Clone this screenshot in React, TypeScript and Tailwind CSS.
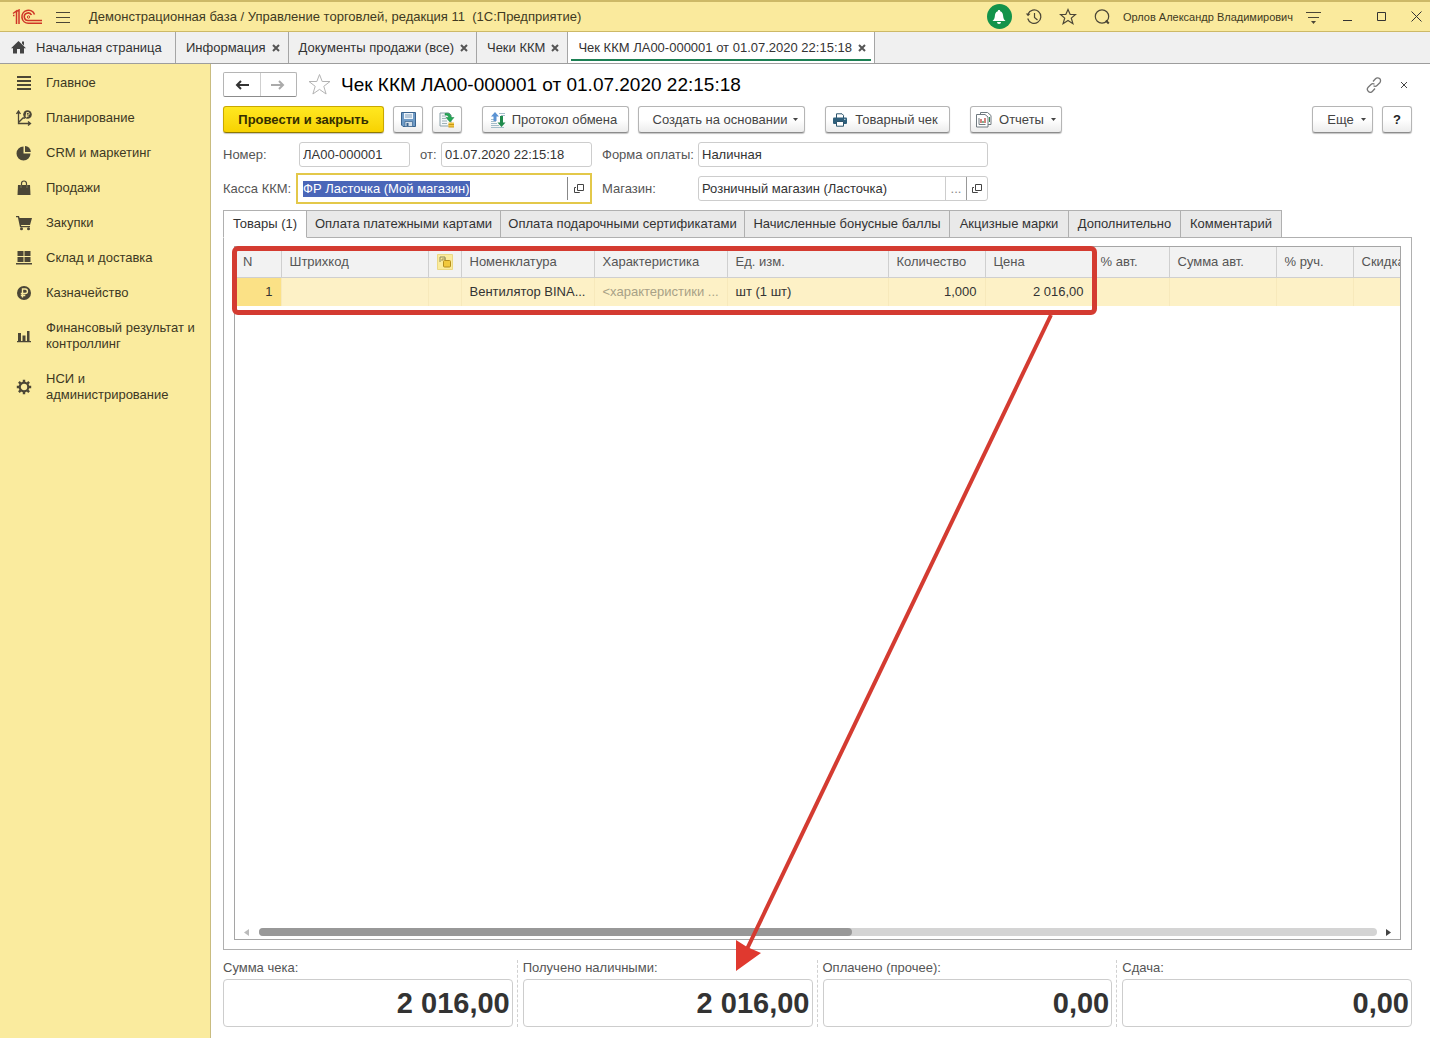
import { useEffect, useRef, useState } from 'react'
import type { ReactNode } from 'react'
import clsx from 'clsx'

const openTabs = [
  { title: 'Информация' },
  { title: 'Документы продажи (все)' },
  { title: 'Чеки ККМ' },
  { title: 'Чек ККМ ЛА00-000001 от 01.07.2020 22:15:18', active: true },
]

const documentTabs = [
  { title: 'Товары (1)', width: 'w-[84px]' },
  { title: 'Оплата платежными картами', width: 'w-[194px]' },
  { title: 'Оплата подарочными сертификатами', width: 'w-[244px]' },
  { title: 'Начисленные бонусные баллы', width: 'w-[205px]' },
  { title: 'Акцизные марки', width: 'w-[119px]' },
  { title: 'Дополнительно', width: 'w-[112px]' },
  { title: 'Комментарий', width: 'w-[101px]' },
]

const totals = [
  { id: 'sum', label: 'Сумма чека:', value: '2 016,00' },
  { id: 'cash', label: 'Получено наличными:', value: '2 016,00' },
  { id: 'other', label: 'Оплачено (прочее):', value: '0,00' },
  { id: 'change', label: 'Сдача:', value: '0,00' },
]

const columns: { title: string; width: string; cell: string; right?: boolean; muted?: boolean }[] = [
  { title: 'N', width: 'w-[46px]', cell: '1', right: true },
  { title: 'Штрихкод', width: 'w-[147px]', cell: '' },
  { title: '', width: 'w-[33px]', cell: '' },
  { title: 'Номенклатура', width: 'w-[133px]', cell: 'Вентилятор BINA...' },
  { title: 'Характеристика', width: 'w-[133px]', cell: '<характеристики ...', muted: true },
  { title: 'Ед. изм.', width: 'w-[161px]', cell: 'шт (1 шт)' },
  { title: 'Количество', width: 'w-[97px]', cell: '1,000', right: true },
  { title: 'Цена', width: 'w-[107px]', cell: '2 016,00', right: true },
  { title: '% авт.', width: 'w-[77px]', cell: '' },
  { title: 'Сумма авт.', width: 'w-[107px]', cell: '' },
  { title: '% руч.', width: 'w-[77px]', cell: '' },
  { title: 'Скидка', width: 'w-[100px]', cell: '' },
]

function MenuIcon() {
  return (
    <svg className="h-4 w-4" viewBox="0 0 16 16" fill="#4b4636">
      <path d="M1 1h14v2H1zM1 5h14v2H1zM1 9h14v2H1zM1 13h14v2H1z" />
    </svg>
  )
}

function PlanIcon() {
  return (
    <svg className="h-4 w-4" viewBox="0 0 16 16" fill="none" stroke="#4b4636">
      <path d="M2.500 2v11.500H14M.5 4l2-3 2 3M12 11.500l2.500 2-2.500 2M3 12l4-4h2" strokeWidth="1.300" />
      <circle cx="11.500" cy="4.500" r="4.300" fill="#4b4636" stroke="none" />
      <path d="M10.500 7.500V2.500h1.500a1.300 1.300 0 0 1 0 2.600H9.500M9.500 6.300h3" stroke="#faeb9e" strokeWidth=".9" />
    </svg>
  )
}

function PieIcon() {
  return (
    <svg className="h-4 w-4" viewBox="0 0 16 16" fill="#4b4636">
      <path d="M7.500 1.500v7h7A7 7 0 1 1 7.500 1.500z" />
      <path d="M9 1a6 6 0 0 1 5.800 6H9z" />
    </svg>
  )
}

function BagIcon() {
  return (
    <svg className="h-4 w-4" viewBox="0 0 16 16">
      <path d="M2 5h12l.5 10h-13z" fill="#4b4636" />
      <path d="M5.500 8V3.500a2.500 2.500 0 0 1 5 0V8" fill="none" stroke="#4b4636" strokeWidth="1.200" />
      <path d="M5 5v3M11 5v3" stroke="#8d8662" strokeWidth=".7" />
    </svg>
  )
}

function CartIcon() {
  return (
    <svg className="h-4 w-4" viewBox="0 0 16 16" fill="#4b4636">
      <path d="M0 1h3l.6 2H16l-2 7H5l.3 1H14v1.300H4L1.900 2.300H0z" />
      <circle cx="5.500" cy="13.700" r="1.500" />
      <circle cx="12.500" cy="13.700" r="1.500" />
    </svg>
  )
}

function WarehouseIcon() {
  return (
    <svg className="h-4 w-4" viewBox="0 0 16 16" fill="#4b4636">
      <path d="M1.500 1h6v5h-6zM8.500 1h6v5h-6zM1.500 7h6v5h-6zM8.500 7h6v5h-6zM0 13h16v1.600H0z" />
    </svg>
  )
}

function RubleIcon() {
  return (
    <svg className="h-4 w-4" viewBox="0 0 16 16" fill="none">
      <circle cx="8" cy="8" r="7" fill="#4b4636" />
      <path d="M6.500 12.500V4h2.700a2.200 2.200 0 0 1 0 4.500H4.800M4.800 10.500h4.500" stroke="#faeb9e" strokeWidth="1.400" />
    </svg>
  )
}

function BarsIcon() {
  return (
    <svg className="h-4 w-4" viewBox="0 0 16 16" fill="#4b4636">
      <path d="M2 5h3v8H2zM6.500 7.500h3V13h-3zM11 3h2.500v10H11zM1 13h14v1.200H1z" />
    </svg>
  )
}

function GearIcon() {
  return (
    <svg className="h-4 w-4" viewBox="0 0 16 16" fill="none" stroke="#4b4636">
      <circle cx="8" cy="8" r="4.300" strokeWidth="2.200" />
      <path
        d="M8 .8v2.400M8 12.800v2.400M.8 8h2.400M12.800 8h2.400M2.900 2.900l1.700 1.700M11.400 11.400l1.700 1.700M2.900 13.100l1.700-1.700M11.400 4.600l1.700-1.700"
        strokeWidth="2.400"
      />
    </svg>
  )
}

const sections: { title: string; icon: ReactNode }[] = [
  { title: 'Главное', icon: <MenuIcon /> },
  { title: 'Планирование', icon: <PlanIcon /> },
  { title: 'CRM и маркетинг', icon: <PieIcon /> },
  { title: 'Продажи', icon: <BagIcon /> },
  { title: 'Закупки', icon: <CartIcon /> },
  { title: 'Склад и доставка', icon: <WarehouseIcon /> },
  { title: 'Казначейство', icon: <RubleIcon /> },
  { title: 'Финансовый результат и контроллинг', icon: <BarsIcon /> },
  { title: 'НСИ и администрирование', icon: <GearIcon /> },
]

function Caret() {
  return (
    <svg className="h-[3px] w-[5px] shrink-0" viewBox="0 0 5 3" fill="#444">
      <path d="M0 0h5L2.500 3z" />
    </svg>
  )
}

function CloseMark({ className }: { className?: string }) {
  return (
    <svg className={className} viewBox="0 0 8 8" fill="none" stroke="currentColor">
      <path d="M1 1l6 6M7 1L1 7" />
    </svg>
  )
}

function OpenIcon() {
  return (
    <svg className="h-[10px] w-[10px]" viewBox="0 0 10 10" fill="none" stroke="#444">
      <path d="M3.500 .5h6v6h-6zM2 3.500H.5v5h5V8" />
    </svg>
  )
}

function ToolButton({ className, children, label }: { className: string; children: ReactNode; label?: string }) {
  return (
    <button
      aria-label={label}
      className={clsx(
        'flex h-[27px] shrink-0 items-center justify-center rounded-[3px] border border-[#b5b5b5] border-b-[#8c8c8c] bg-linear-to-b from-white from-50% to-[#ececec] whitespace-nowrap shadow-[0_1px_1px_#c4c4c4]',
        className
      )}
    >
      {children}
    </button>
  )
}

function TitleBar() {
  return (
    <header className="flex h-8 items-center border-t-2 border-b border-[#cdb967] bg-[#faea9d] pr-2 text-[#3f3a22]">
      <svg className="ml-3 h-4 w-[31px]" viewBox="0 0 31 16" fill="none" stroke="#cf3527">
        <path d="M1 4.500L4.500 2v13M1 6.500h1.500M7 15V1L4 3" strokeWidth="1.500" />
        <path d="M22.500 5.500A6.500 6.500 0 1 0 16.500 14.300H30" strokeWidth="1.600" />
        <path d="M19.500 6A3.800 3.800 0 1 0 16.500 11.500H30" strokeWidth="1.600" />
        <circle cx="16.500" cy="8" r="1.200" strokeWidth="1" />
      </svg>
      <button aria-label="Меню" className="ml-3">
        <svg className="h-3 w-4" viewBox="0 0 16 12" stroke="#4b4636">
          <path d="M1 1.500h14M1 6.500h14M1 11.500h14" />
        </svg>
      </button>
      <h1 className="ml-[18px] flex-1 text-[13px] whitespace-pre">
        Демонстрационная база / Управление торговлей, редакция 11  (1С:Предприятие)
      </h1>
      <button aria-label="Уведомления" className="flex h-[25px] w-[25px] items-center justify-center rounded-full bg-[#13934b]">
        <svg className="h-4 w-4" viewBox="0 0 16 16" fill="#fff">
          <path d="M8 1c.8 0 1.200.5 1.200 1.200C11.500 3 12 5 12.200 7.500c.2 2 .8 3 2.300 4.500h-13C3 10.500 3.600 9.500 3.800 7.500 4 5 4.500 3 6.800 2.200 6.800 1.500 7.200 1 8 1zM6 13h4a2 2 0 0 1-4 0z" />
        </svg>
      </button>
      <button aria-label="История" className="ml-[13px]">
        <svg className="h-[18px] w-[18px]" viewBox="0 0 18 18" fill="none" stroke="#4b4636" strokeWidth="1.200">
          <path d="M3 6a6.700 6.700 0 1 1-.3 4.500M9.500 5v4.500l3 2.500" />
          <path d="M.8 5.500L3 8.300l2.500-2.500z" fill="#4b4636" stroke="none" />
        </svg>
      </button>
      <button aria-label="Избранное" className="ml-4">
        <svg className="h-[18px] w-[18px]" viewBox="0 0 18 18" fill="none" stroke="#4b4636" strokeWidth="1.200">
          <path d="M9 1.500l2.200 5h5.300l-4.200 3.600 1.600 5.600L9 12.400l-4.900 3.300 1.600-5.600L1.500 6.500h5.300z" />
        </svg>
      </button>
      <button aria-label="Поиск" className="ml-4">
        <svg className="h-[18px] w-[18px]" viewBox="0 0 18 18" fill="none" stroke="#4b4636">
          <circle cx="9" cy="8.500" r="6.700" strokeWidth="1.200" />
          <path d="M12.800 12.500l3 3" strokeWidth="2" />
        </svg>
      </button>
      <span className="ml-3 text-[11px]">Орлов Александр Владимирович</span>
      <button aria-label="Настройки" className="ml-3">
        <svg className="h-4 w-4" viewBox="0 0 16 16" fill="none" stroke="#4b4636">
          <path d="M1 3.500h15M3 8.500h11" strokeWidth="1.200" />
          <path d="M6 12h5l-2.500 3z" fill="#4b4636" stroke="none" />
        </svg>
      </button>
      <button aria-label="Свернуть" className="ml-[22px]">
        <svg className="h-[10px] w-[10px]" viewBox="0 0 10 10" stroke="#333">
          <path d="M0 8.500h9" />
        </svg>
      </button>
      <button aria-label="Развернуть" className="ml-6">
        <svg className="h-[10px] w-[10px]" viewBox="0 0 10 10" fill="none" stroke="#333">
          <path d="M.5 .5h8v8h-8z" />
        </svg>
      </button>
      <button aria-label="Закрыть программу" className="ml-6">
        <svg className="h-[11px] w-[11px]" viewBox="0 0 11 11" stroke="#333">
          <path d="M.5 .5l10 10M10.500 .5l-10 10" />
        </svg>
      </button>
    </header>
  )
}

function OpenTabs() {
  return (
    <nav className="flex h-8 border-b border-[#9d9d9d] bg-[#f0f0f0] text-[#333]">
      <a href="#home" className="flex w-[176px] items-center border-r border-[#a5a5a5] pl-[11px]">
        <svg className="mr-[10px] h-[15px] w-[15px]" viewBox="0 0 15 15" fill="#444">
          <path d="M7.500 1L15 8.200h-2V13.500H9V9H6v4.500H2V8.200H0zM11 1.500h2v4l-2-2z" />
        </svg>
        Начальная страница
      </a>
      {openTabs.map((tab) => (
        <div
          key={tab.title}
          className={clsx('relative flex items-center gap-[6px] border-r border-[#a5a5a5] pr-2 pl-[10px]', tab.active && 'bg-white')}
        >
          <a href="#tab">{tab.title}</a>
          <button aria-label={'Закрыть ' + tab.title}>
            <CloseMark className="h-2 w-2 stroke-2 text-[#555]" />
          </button>
          {tab.active && <div className="absolute inset-x-[3px] bottom-[2px] h-[2px] bg-[#1d8054]" />}
        </div>
      ))}
    </nav>
  )
}

function Sidebar() {
  return (
    <aside className="w-[211px] shrink-0 border-r border-[#c9bc80] bg-[#faeb9e]">
      <ul className="flex flex-col gap-[19px] pt-[11px] pr-3 pl-4">
        {sections.map((section) => (
          <li key={section.title}>
            <a href="#section" className="flex items-center gap-[14px] leading-4 text-[#3d3823]">
              <span className="shrink-0">{section.icon}</span>
              {section.title}
            </a>
          </li>
        ))}
      </ul>
    </aside>
  )
}

function Toolbar() {
  return (
    <div className="mt-[9px] flex items-center gap-[9px] text-[#444]">
      <button className="h-[27px] w-[161px] rounded-[3px] border border-[#c9a800] border-b-[#8f7900] bg-linear-to-b from-[#ffe81f] to-[#f7d200] font-bold text-[#332d00] shadow-[0_1px_1px_#c4c4c4]">
        Провести и закрыть
      </button>
      <ToolButton className="w-[30px]" label="Записать">
        <svg className="h-[15px] w-[15px]" viewBox="0 0 15 15">
          <path d="M.5 .5h14v14H2l-1.500-1.500z" fill="#6f9bc6" stroke="#3a648f" />
          <path d="M3 1h9v6H3z" fill="#eef5fb" />
          <path d="M4 3h7M4 5h7" stroke="#7f9dbb" />
          <path d="M4 9.500h7.500v5H4z" fill="#d5e0ea" stroke="#3a648f" strokeWidth=".7" />
          <path d="M5.500 11h2v3h-2z" fill="#3a648f" />
        </svg>
      </ToolButton>
      <ToolButton className="w-[30px]" label="Провести">
        <svg className="h-4 w-4" viewBox="0 0 16 16" fill="none">
          <path d="M1 1h9l2 2v11H1z" fill="#f3f7f8" stroke="#8ba0a8" />
          <path d="M3 4h4M3 6.500h4M3 9h5M3 11.500h5" stroke="#9fb3ba" />
          <path d="M6 1.500c4-1 6 .8 6.200 4H15l-4 4.500-4-4.500h2.500C9.500 4 8.500 3 6 3z" fill="#23a856" stroke="#16803d" strokeWidth=".5" />
          <path d="M9.500 10.500H15v4.500H9.500z" fill="#f2c744" />
          <path d="M9.500 12.500H15M9.500 15H15" stroke="#c99718" />
        </svg>
      </ToolButton>
      <ToolButton className="ml-[11px] w-[147px] gap-[6px] pr-1">
        <svg className="h-4 w-4" viewBox="0 0 16 16" fill="none">
          <path d="M1 7.500h4M1 9.500h5M1 11.500h6M1 13.500h8M9 1.500h6M11 3.500h4M1 15.500h13" stroke="#a3bdc9" />
          <path d="M5 0l4 4.500H6.500V9h-3V4.500H1z" fill="#5b93d3" />
          <path d="M11.500 15l-4-4.500H10V4h3v6.500h2.500z" fill="#1f8a4c" />
        </svg>
        Протокол обмена
      </ToolButton>
      <ToolButton className="w-[167px] gap-[6px] pl-2">
        Создать на основании
        <Caret />
      </ToolButton>
      <ToolButton className="ml-[11px] w-[125px] gap-2 pr-1">
        <svg className="h-[14px] w-[14px]" viewBox="0 0 14 14" fill="none">
          <path d="M3.500 5V.8h5.500l1.500 1.500V5" fill="#fff" stroke="#2c546c" />
          <rect x="0" y="4.500" width="14" height="6.500" rx="1" fill="#2f5f7b" />
          <path d="M3.500 8.500h7v4.700h-7z" fill="#fff" stroke="#2c546c" />
          <path d="M11 6.300h1.500" stroke="#cfe2ec" />
        </svg>
        Товарный чек
      </ToolButton>
      <ToolButton className="ml-[11px] w-[92px] gap-[7px]">
        <svg className="h-4 w-4" viewBox="0 0 16 16" fill="none" stroke="#707a80">
          <path d="M4.500 2.500v-2h7l3.500 3v9h-3" fill="#fff" />
          <path d="M.5 2.500H9l3 2.500v10H.5z" fill="#fff" />
          <path d="M3 6v6.500h6.500" />
          <path d="M5 7v4" stroke="#b8443c" strokeWidth="1.300" />
          <path d="M7 9v2" stroke="#3b8a55" strokeWidth="1.300" />
          <path d="M9 6v5" stroke="#b8443c" strokeWidth="1.300" />
          <path d="M13.500 5v5" stroke="#3b8a55" />
        </svg>
        Отчеты
        <Caret />
      </ToolButton>
      <ToolButton className="ml-auto w-[61px] gap-[7px] pl-2">
        Еще
        <Caret />
      </ToolButton>
      <ToolButton className="w-[30px] font-bold text-[#222]">?</ToolButton>
    </div>
  )
}

const fieldClass = 'h-[25px] rounded-[3px] border border-[#cdcdcd] bg-white px-[3px] text-[#333] outline-none'

function DocumentForm() {
  const kassaRef = useRef<HTMLInputElement>(null)

  useEffect(() => {
    kassaRef.current?.focus()
    kassaRef.current?.select()
  }, [])

  return (
    <div className="mt-[9px] grid grid-cols-[73px_296px_106px_290px] items-center gap-y-[6px] text-[#555]">
      <label htmlFor="number">Номер:</label>
      <div className="flex items-center pl-[3px]">
        <input id="number" className={clsx(fieldClass, 'w-[111px]')} defaultValue="ЛА00-000001" />
        <label htmlFor="date" className="w-[31px] pl-[10px]">от:</label>
        <input id="date" className={clsx(fieldClass, 'min-w-0 flex-1')} defaultValue="01.07.2020 22:15:18" />
      </div>
      <label htmlFor="payment" className="pl-[10px]">Форма оплаты:</label>
      <input id="payment" className={fieldClass} defaultValue="Наличная" />

      <label htmlFor="kassa" className="whitespace-nowrap">Касса ККМ:</label>
      <div className="flex h-[31px] border-2 border-[#e3c84a] bg-white py-[2px]">
        <input
          id="kassa"
          ref={kassaRef}
          className="min-w-0 flex-1 px-[5px] text-[#333] outline-none selection:bg-[#4a66b8] selection:text-white"
          defaultValue="ФР Ласточка (Мой магазин)"
        />
        <button aria-label="Открыть кассу" className="flex w-[23px] items-center justify-center border-l border-[#888]">
          <OpenIcon />
        </button>
      </div>
      <label htmlFor="shop" className="pl-[10px]">Магазин:</label>
      <div className="flex h-[25px] rounded-[3px] border border-[#cdcdcd] bg-white">
        <input id="shop" className="min-w-0 flex-1 px-[3px] text-[#333] outline-none" defaultValue="Розничный магазин (Ласточка)" />
        <button aria-label="Выбрать магазин" className="w-[21px] border-l border-[#cdcdcd] text-[#888]">...</button>
        <button aria-label="Открыть магазин" className="flex w-[21px] items-center justify-center border-l border-[#999]">
          <OpenIcon />
        </button>
      </div>
    </div>
  )
}

function GoodsTable() {
  return (
    <table className="w-[1218px] table-fixed border-collapse text-left">
      <thead>
        <tr className="h-[30px] border-b border-[#cfcfcf] bg-[#f2f2f2] text-[#555]">
          {columns.map((column, i) => (
            <th key={i} className={clsx(column.width, 'border-r border-[#cfcfcf] pr-0 pl-2 font-normal whitespace-nowrap')}>
              {column.title || (
                <svg className="h-4 w-4" viewBox="0 0 16 16" role="img" aria-label="Отложено">
                  <path d="M.5 .5h15v15H.5z" fill="#fbeb9c" stroke="#ecd983" />
                  <path d="M3 8V3h5v3" fill="none" stroke="#8b8a5e" />
                  <path d="M5 7V5h4" fill="none" stroke="#a09555" />
                  <rect x="6.500" y="6.500" width="7" height="6.500" rx="1" fill="#f1c83c" stroke="#b58e1c" />
                </svg>
              )}
            </th>
          ))}
        </tr>
      </thead>
      <tbody>
        <tr className="h-[29px] bg-[#fdf1c6] text-[#333]">
          {columns.map((column, i) => (
            <td
              key={i}
              className={clsx(
                'border-r border-[#f7e9bb] px-2 whitespace-nowrap',
                column.right && 'text-right',
                column.muted && 'text-[#a8a187]',
                i === 0 && 'bg-[#fbe186]'
              )}
            >
              {column.cell}
            </td>
          ))}
        </tr>
      </tbody>
    </table>
  )
}

// red frame over the goods row and the arrow down to the cash total
function Callout() {
  return (
    <div className="pointer-events-none">
      <div className="absolute top-[-1px] left-[-3px] h-[69px] w-[865px] rounded-[6px] border-5 border-[#d43b31]" />
      <svg className="absolute top-[66px] left-[495px] h-[660px] w-[330px]" viewBox="0 0 330 660">
        <path d="M321 2L17 636" stroke="#d43b31" strokeWidth="4" />
        <path d="M6 658V627L17 634L31 640z" fill="#e0392f" />
      </svg>
    </div>
  )
}

export default function App() {
  const [activeTab, setActiveTab] = useState(0)

  return (
    <div className="flex min-h-screen flex-col bg-white font-['Liberation_Sans',Arial,sans-serif] text-[13px] leading-4">
      <TitleBar />
      <OpenTabs />
      <div className="flex flex-1">
        <Sidebar />
        <main className="flex min-w-0 flex-1 flex-col pt-2 pr-[18px] pb-[11px] pl-3">
          <div className="flex h-[25px] items-center">
            <div className="flex h-[25px] w-[74px] rounded-[2px] border border-[#b5b5b5] border-b-[#8c8c8c]">
              <button aria-label="Назад" className="flex flex-1 items-center justify-center border-r border-[#cfcfcf]">
                <svg className="h-[10px] w-[14px]" viewBox="0 0 14 10" fill="none" stroke="#333" strokeWidth="2">
                  <path d="M14 5H2M6 1L2 5l4 4" />
                </svg>
              </button>
              <button aria-label="Вперед" className="flex flex-1 items-center justify-center">
                <svg className="h-[10px] w-[14px]" viewBox="0 0 14 10" fill="none" stroke="#aaa" strokeWidth="2">
                  <path d="M0 5h12M8 1l4 4-4 4" />
                </svg>
              </button>
            </div>
            <button aria-label="В избранное" className="ml-[11px]">
              <svg className="h-[23px] w-[23px]" viewBox="0 0 23 23" fill="none" stroke="#b3b3b3">
                <path d="M11.500 1.500l2.700 7h7.800l-6.200 4.800 2.300 7.700-6.600-4.600L4.900 21l2.300-7.700L1 8.500h7.800z" />
              </svg>
            </button>
            <h2 className="ml-[10px] flex-1 text-[19px] text-black">Чек ККМ ЛА00-000001 от 01.07.2020 22:15:18</h2>
            <button aria-label="Ссылка">
              <svg className="h-4 w-4" viewBox="0 0 16 16" fill="none" stroke="#777" strokeWidth="1.300">
                <path d="M7 4.500l2.500-2.700a2.800 2.800 0 0 1 4.300 3.900L11 8.500a2.800 2.800 0 0 1-3.500.3M9 11.500l-2.500 2.700a2.800 2.800 0 0 1-4.300-3.900L5 7.500a2.800 2.800 0 0 1 3.500-.3" />
              </svg>
            </button>
            <button aria-label="Закрыть" className="mr-1 ml-[18px]">
              <CloseMark className="h-2 w-2 text-[#444]" />
            </button>
          </div>

          <Toolbar />
          <DocumentForm />

          <div role="tablist" className="relative z-10 mt-[6px] flex">
            {documentTabs.map((tab, i) => (
              <button
                key={tab.title}
                role="tab"
                aria-selected={i === activeTab}
                onClick={() => setActiveTab(i)}
                className={clsx(
                  'h-7 border-t border-r border-b border-[#b0b0b0] whitespace-nowrap text-[#333] first:border-l',
                  tab.width,
                  i === activeTab ? 'border-b-white bg-white' : 'bg-[#e9e9e9]'
                )}
              >
                {tab.title}
              </button>
            ))}
          </div>
          <div className="-mt-px flex flex-1 border border-[#b0b0b0] px-[10px] pt-2 pb-[9px]">
            <div className="relative flex min-w-0 flex-1 flex-col border border-[#a5a5a5]">
              <div className="flex-1 overflow-hidden">
                <GoodsTable />
              </div>
              <div className="flex h-[14px] items-center px-[9px]">
                <svg className="h-[7px] w-[5px]" viewBox="0 0 5 7" fill="#bbb">
                  <path d="M5 0v7L0 3.500z" />
                </svg>
                <div className="mr-[9px] ml-[10px] h-2 flex-1 rounded-full bg-[#d4d4d4]">
                  <div className="h-2 w-[53%] rounded-full bg-[#989898]" />
                </div>
                <svg className="h-[7px] w-[5px]" viewBox="0 0 5 7" fill="#444">
                  <path d="M0 0v7l5-3.500z" />
                </svg>
              </div>
              <Callout />
            </div>
          </div>

          <div className="mt-[10px] grid grid-cols-4 gap-[10px]">
            {totals.map((total, i) => (
              <div key={total.id} className={clsx('relative', i > 0 && 'before:absolute before:inset-y-0 before:-left-[6px] before:border-l before:border-dashed before:border-[#d0d0d0]')}>
                <label htmlFor={total.id} className="block text-[#555]">{total.label}</label>
                <input
                  id={total.id}
                  className="mt-[3px] block h-12 w-full rounded-[4px] border border-[#cdcdcd] bg-white px-[2px] text-right text-[29px] font-bold text-[#333] outline-none"
                  defaultValue={total.value}
                />
              </div>
            ))}
          </div>
        </main>
      </div>
    </div>
  )
}
